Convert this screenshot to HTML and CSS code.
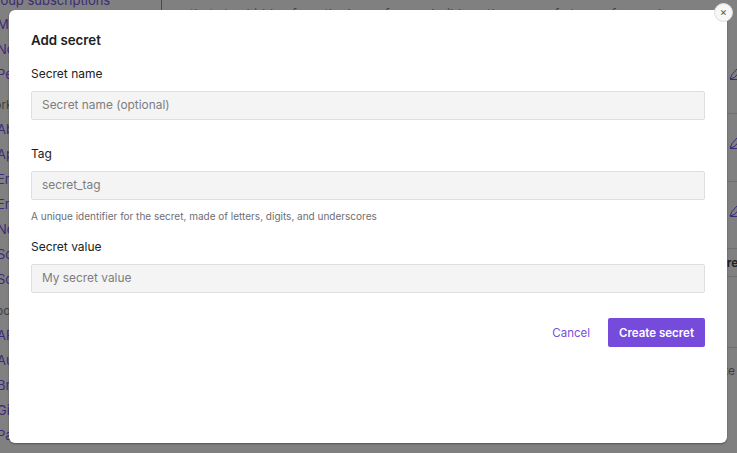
FILE: index.html
```html
<!DOCTYPE html>
<html lang="en">
<head>
  <meta charset="UTF-8">
  <title>Add secret</title>
  <link rel="stylesheet" href="styles.css">
</head>
<body>
  <div class="page">
    <nav class="sidebar">
      <a class="nav-first">Group subscriptions</a>
      <a>My tokens</a>
      <a>Notifications</a>
      <a>Personal</a>
      <span class="nav-head">Works</span>
      <a>About</a>
      <a>Apps</a>
      <a>Emails</a>
      <a>Emails</a>
      <a>Notes</a>
      <a>Social</a>
      <a>Social</a>
      <span class="nav-head nav-head-low">hooks</span>
      <a>API</a>
      <a>Auth</a>
      <a>Branches</a>
      <a>Git</a>
      <a>Pages</a>
    </nav>
    <main class="behind">
      <p class="behind-text">Secrets are encrypted values that your workflows can read at run time, and<br>that stay hidden from the logs of every build, so they are safe to use for any key.</p>
      <div class="behind-row behind-row-1">
        <svg class="pencil" viewBox="0 0 14 12"><path d="M1 11 L3 6.500 L8 1 L11 3.500 L5.500 9.500 Z M1 11.500 H14"/></svg>
      </div>
      <div class="behind-row behind-row-2">
        <svg class="pencil" viewBox="0 0 14 12"><path d="M1 11 L3 6.500 L8 1 L11 3.500 L5.500 9.500 Z M1 11.500 H14"/></svg>
      </div>
      <div class="behind-row behind-row-3">
        <svg class="pencil" viewBox="0 0 14 12"><path d="M1 11 L3 6.500 L8 1 L11 3.500 L5.500 9.500 Z M1 11.500 H14"/></svg>
      </div>
      <div class="behind-head">Create</div>
      <div class="behind-empty"></div>
      <div class="behind-note">Make</div>
    </main>
  </div>

  <div class="modal">
    <button class="modal-close" type="button">×</button>
    <h2>Add secret</h2>
    <div class="field field-name">
      <label>Secret name</label>
      <input type="text" placeholder="Secret name (optional)">
    </div>
    <div class="field field-tag">
      <label>Tag</label>
      <input type="text" placeholder="secret_tag">
      <p class="hint">A unique identifier for the secret, made of letters, digits, and underscores</p>
    </div>
    <div class="field">
      <label>Secret value</label>
      <input type="text" placeholder="My secret value">
    </div>
    <div class="actions">
      <button class="btn-cancel" type="button">Cancel</button>
      <button class="btn-create" type="button">Create secret</button>
    </div>
  </div>
</body>
</html>
```

FILE: styles.css
```css
html, body {
  margin: 0;
  height: 100%;
}

body {
  background: #808080;
  font-family: Inter, "Liberation Sans", sans-serif;
  overflow: hidden;
}

.page {
  display: flex;
  align-items: flex-start;
  width: 737px;
  height: 453px;
  overflow: hidden;
}

.sidebar {
  width: 161px;
  height: 440px;
  flex-shrink: 0;
  border-right: 1px solid #4a4a4a;
  display: flex;
  flex-direction: column;
  margin-top: -7px;
  font-size: 13px;
  line-height: 25px;
  white-space: nowrap;
}

.sidebar a {
  flex-shrink: 0;
  color: #3d2a78;
  margin-left: -3px;
}

.sidebar .nav-first {
  margin-left: -14px;
  height: 19px;
  line-height: 14px;
}

.nav-head {
  flex-shrink: 0;
  color: #3f3f3f;
  font-size: 12px;
  margin-left: -17px;
  margin-top: 5px;
}

.nav-head-low {
  margin-left: -11px;
  margin-top: 6px;
}

.behind {
  flex: 1;
  min-width: 0;
  display: flex;
  flex-direction: column;
}

.behind-text {
  margin: -19px 0 0;
  padding-left: 28px;
  height: 43px;
  font-size: 13px;
  line-height: 22px;
  color: #444;
  white-space: nowrap;
}

.behind-row {
  box-sizing: border-box;
  border-bottom: 1px solid #6f6f6f;
  display: flex;
  justify-content: flex-end;
  align-items: center;
}

.behind-row-1 {
  height: 90px;
  padding-top: 10px;
}

.behind-row-2 {
  height: 68px;
  padding-bottom: 10px;
}

.behind-row-3 {
  height: 66px;
  padding-bottom: 9px;
  border-bottom: 0;
}

.pencil {
  width: 14px;
  height: 12px;
  margin-right: -6px;
  flex-shrink: 0;
  fill: none;
  stroke: #3d2a78;
  stroke-width: 1;
}

.behind-head {
  box-sizing: border-box;
  height: 29px;
  line-height: 27px;
  border-top: 1px solid #6f6f6f;
  border-bottom: 1px solid #6f6f6f;
  padding-left: 556px;
  font-size: 12px;
  font-weight: 600;
  color: #222;
  white-space: nowrap;
  overflow: hidden;
}

.behind-empty {
  height: 71px;
  box-sizing: border-box;
  border-bottom: 1px solid #6f6f6f;
}

.behind-note {
  padding-left: 542px;
  margin-top: 15px;
  font-size: 12px;
  color: #3f3f3f;
  white-space: nowrap;
  overflow: hidden;
}

/* modal */
.modal {
  position: absolute;
  left: 9px;
  top: 10px;
  width: 718px;
  height: 433px;
  box-sizing: border-box;
  padding: 21px 22px 0;
  background: #fff;
  border-radius: 6px;
  box-shadow: 0 1px 2px rgba(0,0,0,0.35);
  color: #202123;
}

.modal h2 {
  margin: 0 0 17px;
  font-size: 13.300px;
  line-height: 18px;
  font-weight: 600;
}

.modal-close {
  position: absolute;
  top: -7px;
  right: -6px;
  width: 19px;
  height: 19px;
  padding: 0;
  border: 1px solid #ddd;
  border-radius: 50%;
  background: #f7f7f7;
  color: #555;
  font-family: inherit;
  font-size: 11px;
  line-height: 15px;
}

.field label {
  display: block;
  font-size: 12px;
  line-height: 16px;
  margin-bottom: 9px;
}

.field input {
  display: block;
  width: 100%;
  height: 29px;
  box-sizing: border-box;
  padding: 0 10px 2px;
  border: 1px solid #dedede;
  border-radius: 2px;
  background: #f4f4f4;
  font-family: inherit;
  font-size: 11.900px;
}

.field input::placeholder {
  color: #7d7d80;
  opacity: 1;
}

.field-name {
  margin-bottom: 26px;
}

.field-tag {
  margin-bottom: 16px;
}

.hint {
  margin: 9px 0 0;
  font-size: 10px;
  line-height: 14px;
  color: #6e6e73;
}

.actions {
  display: flex;
  justify-content: flex-end;
  align-items: center;
  gap: 18px;
  margin-top: 25px;
}

.actions button {
  font-family: inherit;
  font-size: 11.500px;
  font-weight: 500;
  border: 0;
  padding: 0;
}

.actions .btn-cancel {
  background: none;
  color: #7a4fd6;
  font-weight: 400;
}

.actions .btn-create {
  width: 97px;
  height: 29px;
  border-radius: 2px;
  background: #764bdc;
  color: #fff;
  font-weight: 600;
}
```
